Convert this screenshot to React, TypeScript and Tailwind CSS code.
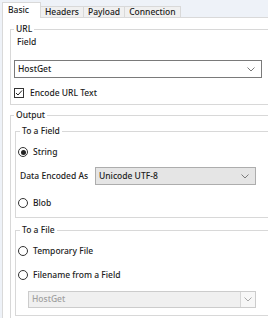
import type { ReactNode } from "react";

function Chevron({ color = "#7a7a7a" }: { color?: string }) {
  return (
    <svg width="8" height="5" viewBox="0 0 8 5" className="shrink-0">
      <polyline points="0.5,0.5 4,4 7.5,0.5" fill="none" stroke={color} strokeWidth="1" />
    </svg>
  );
}

function Radio({ checked, label }: { checked?: boolean; label: string }) {
  return (
    <div className="flex h-[12px] items-center gap-[5px] pl-[1px]">
      <span className="flex h-[10px] w-[10px] items-center justify-center rounded-full border border-[#333]">
        {checked && <span className="h-[5px] w-[5px] rounded-full bg-[#222]" />}
      </span>
      <span>{label}</span>
    </div>
  );
}

function Group({ title, children, className = "" }: { title: string; children: ReactNode; className?: string }) {
  return (
    <fieldset className={`border border-[#d8d8d8] ${className}`}>
      <legend className="ml-[3px] px-[2px] leading-[12px]">{title}</legend>
      {children}
    </fieldset>
  );
}

export default function App() {
  const tabs = ["Headers", "Payload", "Connection"];
  return (
    <div className="flex h-[318px] w-[268px] flex-col overflow-hidden bg-[#eef2f8] font-['Noto_Sans',sans-serif] text-[8.5px] font-medium text-[#1b1b1b]">
      <div className="relative z-10 -mb-px flex items-end pl-[2px] pt-[2px]">
        <div className="flex h-[16px] w-[39px] items-center border border-b-0 border-[#d9d9d9] bg-white pl-[5px]">Basic</div>
        {tabs.map((t) => (
          <div key={t} className="-ml-px flex h-[12px] items-center border border-[#d9d9d9] bg-[#f0f0f0] px-[4px] first:ml-0">
            {t}
          </div>
        ))}
      </div>
      <div className="ml-[2px] flex-1 border-l border-t border-[#d9d9d9] bg-white pl-[7px] pt-[5px]">
        <Group title="URL" className="w-[300px] pb-[5px]">
          <div className="mt-[1px] pl-[6px] leading-[12px]">Field</div>
          <div className="ml-[3px] mt-[12px] flex h-[18px] w-[248px] items-center justify-between border border-[#7a7a7a] bg-white pl-[3px] pr-[6px]">
            <span>HostGet</span>
            <Chevron />
          </div>
          <div className="ml-[3px] mt-[9px] flex h-[12px] items-center gap-[6px]">
            <span className="flex h-[10px] w-[10px] items-center justify-center border border-[#333] bg-white">
              <svg width="8" height="8" viewBox="0 0 8 8">
                <polyline points="1,4 3,6 7,1.5" fill="none" stroke="#222" strokeWidth="1" />
              </svg>
            </span>
            <span>Encode URL Text</span>
          </div>
        </Group>

        <Group title="Output" className="mt-[4px] w-[300px] pb-[4px]">
          <Group title="To a Field" className="ml-[4px] mt-[4px] pb-[8px] pl-[1px]">
            <div className="mt-[9px]">
              <Radio checked label="String" />
            </div>
            <div className="mt-[9px] flex items-center">
              <span className="w-[78px] pl-[3px]">Data Encoded As</span>
              <div className="flex h-[18px] w-[161px] items-center justify-between border border-[#adadad] bg-[#e5e5e5] pl-[3px] pr-[6px]">
                <span>Unicode UTF-8</span>
                <Chevron />
              </div>
            </div>
            <div className="mt-[12px]">
              <Radio label="Blob" />
            </div>
          </Group>

          <Group title="To a File" className="ml-[4px] mt-[6px] pb-[7px] pl-[1px]">
            <div className="mt-[9px]">
              <Radio label="Temporary File" />
            </div>
            <div className="mt-[12px]">
              <Radio label="Filename from a Field" />
            </div>
            <div className="ml-[11px] mt-[10px] flex h-[17px] w-[228px] items-stretch border border-[#cccccc] bg-[#f0f0f0] text-[#a0a0a0]">
              <span className="flex flex-1 items-center pl-[3px]">HostGet</span>
              <span className="flex w-[15px] items-center justify-center border-l border-[#d6d6d6] bg-[#f7f7f7]">
                <Chevron color="#a8a8a8" />
              </span>
            </div>
          </Group>
        </Group>
      </div>
    </div>
  );
}
